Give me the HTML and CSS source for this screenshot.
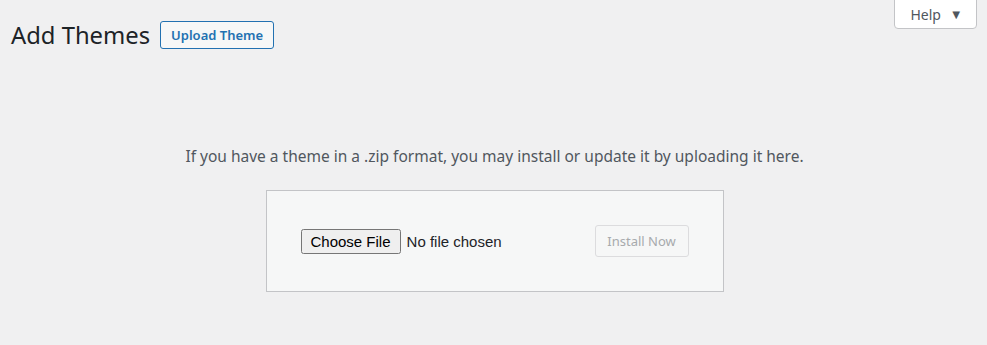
FILE: index.html
```html
<!DOCTYPE html>
<html lang="en">
<head>
  <meta charset="UTF-8" />
  <title>Add Themes</title>
  <link rel="stylesheet" href="styles.css">
</head>
<body>
  <div class="top">
    <div class="title-row">
      <h1>Add Themes</h1>
      <a class="page-title-action" href="#">Upload Theme</a>
    </div>
    <button class="help-link">Help <span class="arrow">&#9660;</span></button>
  </div>

  <!-- Upload form -->
  <div class="upload-theme">
    <p class="install-help">If you have a theme in a .zip format, you may install or update it by uploading it here.</p>
    <form class="upload-form">
      <input type="file" id="themezip" name="themezip">
      <button class="button" type="submit" disabled>Install Now</button>
    </form>
  </div>
</body>
</html>
```

FILE: styles.css
```css
body {
  margin: 0;
  background: #f0f0f1;
  color: #1d2327;
  font-family: "Noto Sans", "Open Sans", sans-serif;
  font-size: 13px;
}
.top {
  display: flex;
  justify-content: space-between;
  align-items: flex-start;
  padding: 0 10px 0 11px;
}
.title-row {
  display: flex;
  align-items: center;
  gap: 10px;
  padding-top: 19px;
}
h1 {
  margin: 0;
  font-size: 23.8px;
  font-weight: 400;
  line-height: 32px;
}
.page-title-action {
  display: inline-block;
  border: 1px solid #2271b1;
  border-radius: 3px;
  background: #f6f7f7;
  color: #2271b1;
  font-size: 13px;
  font-weight: 600;
  line-height: 26px;
  padding: 0 10px;
  text-decoration: none;
}
.help-link {
  width: 83px;
  height: 30px;
  margin-top: -1px;
  background: #fff;
  border: 1px solid #c3c4c7;
  border-radius: 0 0 4px 4px;
  color: #50575e;
  font-family: inherit;
  font-size: 14px;
  padding: 0 0 0 2px;
}
.arrow {
  font-size: 13px;
  margin-left: 5px;
  vertical-align: 1px;
}
.upload-theme {
  display: flex;
  flex-direction: column;
  align-items: center;
  padding: 92px 0 0 2px;
}
.install-help {
  margin: 0 0 21px;
  color: #50575e;
  font-size: 15.5px;
  line-height: 26px;
}
.upload-form {
  box-sizing: border-box;
  width: 458px;
  height: 102px;
  display: flex;
  justify-content: space-between;
  align-items: center;
  padding: 0 34px;
  background: #f6f7f7;
  border: 1px solid #c3c4c7;
}
input[type=file] {
  font-family: "Liberation Sans", Arial, sans-serif;
  font-size: 15px;
  color: #1d2327;
}
input[type=file]::file-selector-button {
  font: inherit;
  padding: 2px 8px;
  margin-right: 6px;
}
.button {
  width: 94px;
  height: 32px;
  background: #f6f7f7;
  border: 1px solid #dcdcde;
  border-radius: 3px;
  color: #a7aaad;
  font-family: inherit;
  font-size: 13px;
  padding: 0;
}
```
